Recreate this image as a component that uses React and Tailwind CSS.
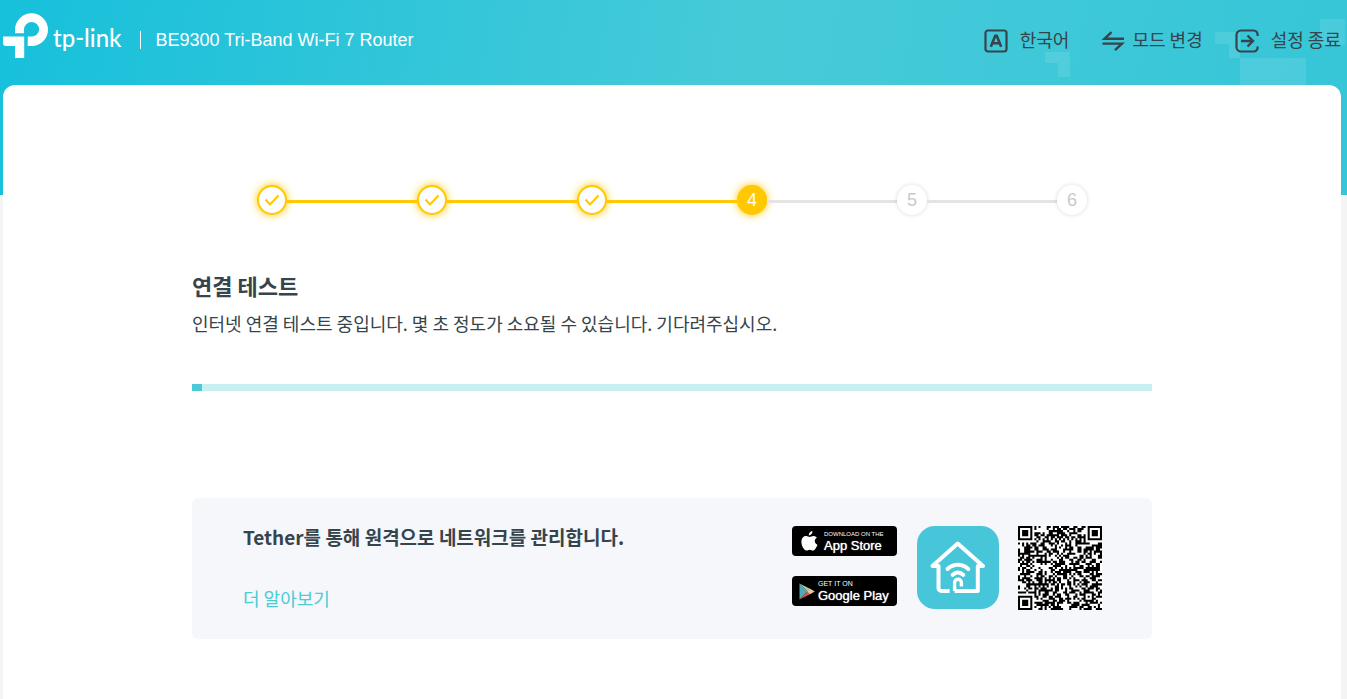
import { useMemo } from 'react';
import clsx from 'clsx';

const TOTAL_STEPS = 6;
const CURRENT_STEP = 4;

function TpLinkMark() {
  return (
    <svg width="46" height="46" viewBox="3 13 46 46" fill="#fff" aria-hidden="true">
      <path d="M15 33.2V29.8A16.5 16.5 0 0 1 48 29.8A16.3 16.3 0 0 1 31.7 46H27.7V36.5H31.7A7.5 7.5 0 0 0 39.2 29.5A7.6 7.6 0 0 0 24 29.5V33.2Z" />
      <path d="M3 36.6H24.2V58H15V46H6A3 3 0 0 1 3 43Z" />
    </svg>
  );
}

function LanguageIcon() {
  return (
    <svg width="24" height="24" viewBox="0 0 24 24" fill="none" stroke="currentColor" strokeWidth="2.2" aria-hidden="true">
      <rect x="1.5" y="1.5" width="21" height="21" rx="2.5" />
      <path d="M6.8 17.8L11.3 6.8H12.7L17.2 17.8M8.5 14.2H15.5" strokeWidth="2.6" />
    </svg>
  );
}

function SwitchIcon() {
  return (
    <svg width="24" height="24" viewBox="0 0 24 24" fill="none" stroke="currentColor" strokeWidth="2.4" aria-hidden="true">
      <path d="M23 9.8H3.5L10.5 3.2" />
      <path d="M1.5 14.6H21L14 21.2" />
    </svg>
  );
}

function ExitIcon() {
  return (
    <svg width="24" height="24" viewBox="0 0 24 24" fill="none" stroke="currentColor" strokeWidth="2.2" aria-hidden="true">
      <path d="M22.6 7V5.5A3.8 3.8 0 0 0 18.8 1.5H6A4.5 4.5 0 0 0 1.5 6V18A4.500 4.500 0 0 0 6 22.500H18.800A3.800 3.800 0 0 0 22.600 18.500V17.500" />
      <path d="M6 12H17.5M12.5 6.5L18 12L12.5 17.5" strokeWidth="2.4" />
    </svg>
  );
}

function HeaderBlocks() {
  return (
    <svg className="absolute right-0 top-0" width="307" height="85" viewBox="1040 0 307 85" fill="#fff" fillOpacity="0.1" aria-hidden="true">
      <path d="M1045 52H1070V77H1058V63H1045Z" />
      <path d="M1215 32H1240V58H1229V44H1215Z" />
      <path d="M1240 58H1306V85H1240Z" />
      <path d="M1320 19H1345V45H1320Z" />
    </svg>
  );
}

function AppleIcon() {
  return (
    <svg width="17" height="20" viewBox="0 0 17 20" fill="#fff" aria-hidden="true">
      <path d="M11.4 0C11.6 2.3 10 4.4 7.8 4.5C7.6 2.4 9.4 .3 11.4 0Z" />
      <path d="M15.8 6.7C13 8.4 13.2 12.3 16.4 13.7C15.6 16 14 19.5 12 19.5C10.7 19.5 10.3 18.7 8.7 18.7C7.1 18.7 6.6 19.5 5.4 19.5C3.2 19.5 .4 15 .4 10.8C.4 7 2.8 5 5.1 5C6.6 5 7.8 6 8.7 6C9.6 6 11 4.9 12.8 5C14 5.1 15.1 5.6 15.8 6.7Z" />
    </svg>
  );
}

function PlayIcon() {
  return (
    <svg width="16" height="17" viewBox="0 0 16 17" aria-hidden="true">
      <path d="M.5 .5V16.5L8.5 8.5Z" fill="#4fa9b5" />
      <path d="M.5 .5L11.5 6L8.5 8.5Z" fill="#a5c9a8" />
      <path d="M.5 16.5L11.5 11L8.5 8.5Z" fill="#d5564c" />
      <path d="M11 5.7L15.8 8.5L11 11.3L8.2 8.5Z" fill="#f0c98a" />
    </svg>
  );
}

function StoreBadge({ icon, caption, name, captionClass, className }) {
  return (
    <a href="#" className={clsx('flex h-[30px] w-[105px] items-center rounded-[4px] bg-black text-white', className)}>
      {icon}
      <span className="flex flex-col whitespace-nowrap font-['Liberation_Sans',sans-serif]">
        <span className={captionClass}>{caption}</span>
        <span className="text-[13px] leading-[15px] [text-shadow:0_0_1px_#fff]">{name}</span>
      </span>
    </a>
  );
}

function TetherIcon() {
  return (
    <svg width="82" height="83" viewBox="0 0 82 83" fill="none" stroke="#fff" strokeWidth="4" strokeLinecap="round" strokeLinejoin="round" aria-label="Tether" role="img">
      <rect width="82" height="83" rx="18" fill="#47c6da" stroke="none" />
      <path d="M37.6 65H60.8V40H66L40.7 17.5L15.5 40H21.5V62A3 3 0 0 0 24.5 65H32.6" strokeLinecap="butt" />
      <path d="M30.5 43C36.5 37.3 45.3 37.3 51.3 43" />
      <path d="M35.6 48.8C38.8 45.6 43 45.6 46.2 48.8" />
      <path d="M37.6 65V56.700A3.400 3.400 0 0 1 44.400 56.700V60.500" strokeWidth="3.400" strokeLinecap="butt" />
    </svg>
  );
}

const QR_SIZE = 41;

function ringModule(x, y, cx, cy, radius) {
  const d = Math.max(Math.abs(x - cx), Math.abs(y - cy));
  if (d > radius) return null;
  if (radius === 4) return d === 3 || d <= 1;
  return d !== 1;
}

function QrCode() {
  const path = useMemo(() => {
    let seed = 9300;
    let d = '';
    for (let y = 0; y < QR_SIZE; y++) {
      for (let x = 0; x < QR_SIZE; x++) {
        seed = (seed * 1103515245 + 12345) % 2147483648;
        const noise = (seed >> 16) % 100 < 54;
        const timing = x === 6 || y === 6 ? (x + y) % 2 === 0 : null;
        const dark =
          ringModule(x, y, 3, 3, 4) ??
          ringModule(x, y, 37, 3, 4) ??
          ringModule(x, y, 3, 37, 4) ??
          ringModule(x, y, 34, 34, 2) ??
          timing ??
          noise;
        if (dark) d += `M${x} ${y}h1v1h-1z`;
      }
    }
    return d;
  }, []);

  return (
    <svg width="84" height="84" viewBox="0 0 41 41" role="img" aria-label="QR">
      <rect width="41" height="41" fill="#fff" />
      <path d={path} fill="#000" />
    </svg>
  );
}

function Step({ number }) {
  const done = number < CURRENT_STEP;
  const current = number === CURRENT_STEP;
  return (
    <li className={clsx('flex items-center', number > 1 && 'flex-1')}>
      {number > 1 && (
        <span className={clsx('mt-[3px] h-[3px] flex-1', number <= CURRENT_STEP ? 'bg-[#ffc800]' : 'bg-[#e4e4e4]')} />
      )}
      <span
        className={clsx(
          'flex size-[30px] items-center justify-center rounded-full text-lg leading-[30px]',
          done && 'border-2 border-[#ffc800] bg-white text-[#ffc800] shadow-[0_0_8px_#ffc800]',
          current && 'bg-[#ffc800] text-white shadow-[0_0_8px_#ffc800]',
          !done && !current && 'bg-white text-[#c8cacb] shadow-[0_0_5px_#00000026]'
        )}
      >
        {done ? (
          <svg width="16" height="14" viewBox="0 0 16 14" fill="none" stroke="currentColor" strokeWidth="2.2" aria-hidden="true">
            <path d="M1.5 6.5L6 11.5L14.5 2.5" />
          </svg>
        ) : (
          number
        )}
      </span>
    </li>
  );
}

function HeaderButton({ icon, label, className }) {
  return (
    <button
      type="button"
      className={clsx("flex items-center whitespace-nowrap font-['Noto_Sans_CJK_KR',sans-serif] text-lg leading-6", className)}
    >
      {icon}
      <span className="pb-[3px]">{label}</span>
    </button>
  );
}

export default function App() {
  return (
    <div className="flex min-h-screen flex-col bg-[#f4f4f5] bg-[linear-gradient(100deg,#17c0db_0%,#47cad8_55%,#35c6d8_100%)] bg-[length:100%_195px] bg-no-repeat font-['Liberation_Sans','Noto_Sans_CJK_KR',sans-serif] text-lg text-[#36444b]">
      <header className="relative flex h-[85px] items-start justify-between pl-[3px] pr-[6px]">
        <HeaderBlocks />
        <div className="flex items-center pt-[13px] text-white">
          <TpLinkMark />
          <span className="ml-1 mt-1 font-['Lato',sans-serif] text-2xl font-medium leading-8">tp-link</span>
          <span className="ml-[19px] mt-2 h-[18px] w-px bg-white" />
          <h1 className="ml-[14px] mt-2 whitespace-nowrap text-lg">BE9300 Tri-Band Wi-Fi 7 Router</h1>
        </div>
        <nav className="relative flex items-center pt-[27px]">
          <HeaderButton icon={<LanguageIcon />} label="한국어" className="gap-3" />
          <HeaderButton icon={<SwitchIcon />} label="모드 변경" className="ml-8 gap-[7px]" />
          <HeaderButton icon={<ExitIcon />} label="설정 종료" className="ml-8 gap-3" />
        </nav>
      </header>

      <main className="ml-[3px] mr-[6px] flex-1 rounded-t-xl bg-white">
        <div className="mx-auto max-w-[960px] font-['Noto_Sans_CJK_KR',sans-serif]">
          <ol className="mx-[65px] flex pt-[100px] font-['Liberation_Sans',sans-serif]">
            {Array.from({ length: TOTAL_STEPS }, (_, i) => (
              <Step key={i} number={i + 1} />
            ))}
          </ol>

          <h2 className="mt-[54px] text-[22px] font-bold leading-8">연결 테스트</h2>
          <p className="mt-[10px] leading-6">
            인터넷 연결 테스트 중입니다. 몇 초 정도가 소요될 수 있습니다. 기다려주십시오.
          </p>

          <div className="mt-[49px] h-[7px] bg-[#c8eff1]" role="progressbar" aria-valuenow={1} aria-valuemin={0} aria-valuemax={100}>
            <div className="h-full bg-[#4acbd6]" style={{ width: '1%' }} />
          </div>

          <section className="mt-[107px] flex h-[141px] items-start justify-between rounded-md bg-[#f5f7fb] pl-[51px] pr-[50px] pt-7">
            <div className="flex flex-col items-start">
              <h3 className="text-[19px] font-bold leading-[22px]">Tether를 통해 원격으로 네트워크를 관리합니다.</h3>
              <a href="#" className="mt-[38px] leading-6 text-[#4acbd6]">더 알아보기</a>
            </div>
            <div className="flex items-start">
              <div className="flex flex-col gap-5">
                <StoreBadge
                  icon={<AppleIcon />}
                  caption="DOWNLOAD ON THE"
                  name="App Store"
                  captionClass="text-[6px] leading-[8px]"
                  className="gap-[6px] pl-[9px]"
                />
                <StoreBadge
                  icon={<PlayIcon />}
                  caption="GET IT ON"
                  name="Google Play"
                  captionClass="text-[7px] leading-[8px]"
                  className="gap-[3px] pl-[7px]"
                />
              </div>
              <div className="ml-5">
                <TetherIcon />
              </div>
              <div className="ml-[19px]">
                <QrCode />
              </div>
            </div>
          </section>
        </div>
      </main>
    </div>
  );
}
